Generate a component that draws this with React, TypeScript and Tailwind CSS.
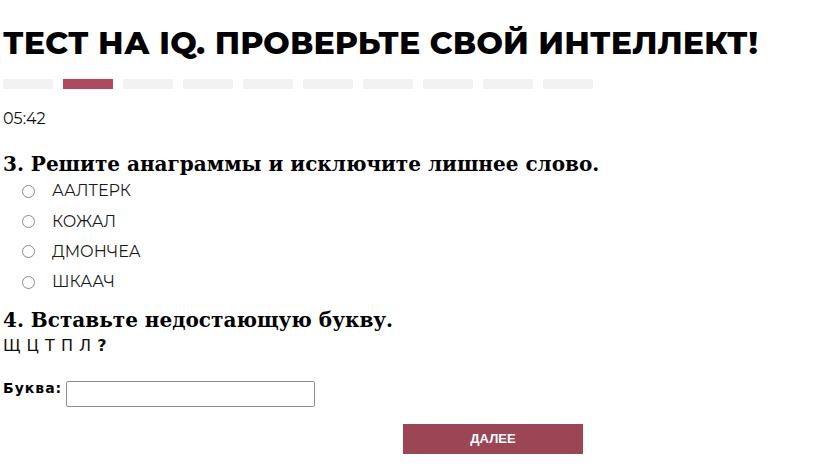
import { useState } from "react";

const steps = Array.from({ length: 10 }, (_, i) => i);

const options = ["ААЛТЕРК", "КОЖАЛ", "ДМОНЧЕА", "ШКААЧ"];

const sans = "font-['Montserrat','Open_Sans','Noto_Sans',sans-serif]";
const slab = "font-['DejaVu_Serif',serif]";
const verd = "font-['DejaVu_Sans',sans-serif]";

export default function App() {
  const [picked, setPicked] = useState<number | null>(null);
  const [letter, setLetter] = useState("");

  return (
    <div className={`min-h-[473px] bg-white px-[3px] text-black ${sans}`}>
      <h1 className="pt-[23px] text-[31.4px] font-extrabold leading-[40px] tracking-[0.2px] uppercase">
        Тест на IQ. Проверьте свой интеллект!
      </h1>

      <div className="mt-[16px] flex gap-[10px]">
        {steps.map((i) => (
          <div
            key={i}
            className={`h-[10px] w-[50px] ${i === 1 ? "bg-[#af4a5e]" : "bg-[#f2f2f2]"}`}
          />
        ))}
      </div>

      <div className="mt-[20px] text-[16px] leading-[20px] text-[#111]">05:42</div>

      <form onSubmit={(e) => e.preventDefault()}>
        <h2 className={`mt-[22px] text-[20px] font-bold leading-[26px] ${slab}`}>
          3. Решите анаграммы и исключите лишнее слово.
        </h2>
        <div className="-mt-[1px] flex flex-col">
          {options.map((o, i) => (
            <label
              key={o}
              className="flex h-[30.4px] cursor-pointer items-center"
              onClick={() => setPicked(i)}
            >
              <span className="ml-[19px] flex h-[13px] w-[13px] items-center justify-center rounded-full border border-[#8c8c8c] bg-white">
                {picked === i && <span className="h-[7px] w-[7px] rounded-full bg-[#1a73e8]" />}
              </span>
              <span className="ml-[17px] text-[16px] leading-[20px] text-[#1a1a1a]">{o}</span>
            </label>
          ))}
        </div>

        <h2 className={`mt-[9px] text-[20px] font-bold leading-[26px] ${slab}`}>
          4. Вставьте недостающую букву.
        </h2>
        <div className={`mt-[3px] text-[16px] leading-[20px] tracking-[0.5px] text-[#111] ${verd}`}>
          Щ Ц Т П Л <b className="font-bold">?</b>
        </div>

        <div className="mt-[25px] flex items-start gap-[4px]">
          <span className={`-mt-[3px] text-[14px] leading-[20px] font-bold tracking-[1px] ${verd}`}>
            Буква:
          </span>
          <input
            value={letter}
            onChange={(e) => setLetter(e.target.value)}
            className="h-[26px] w-[249px] rounded-[2px] border border-[#8e8e96] bg-white px-1 text-[14px] outline-none"
          />
        </div>

        <div className="mt-[17px] flex pl-[400px]">
          <button
            type="submit"
            className="h-[30px] w-[180px] bg-[#9b4555] font-['Liberation_Sans',sans-serif] text-[13px] font-bold text-white"
          >
            ДАЛЕЕ
          </button>
        </div>
      </form>
    </div>
  );
}
